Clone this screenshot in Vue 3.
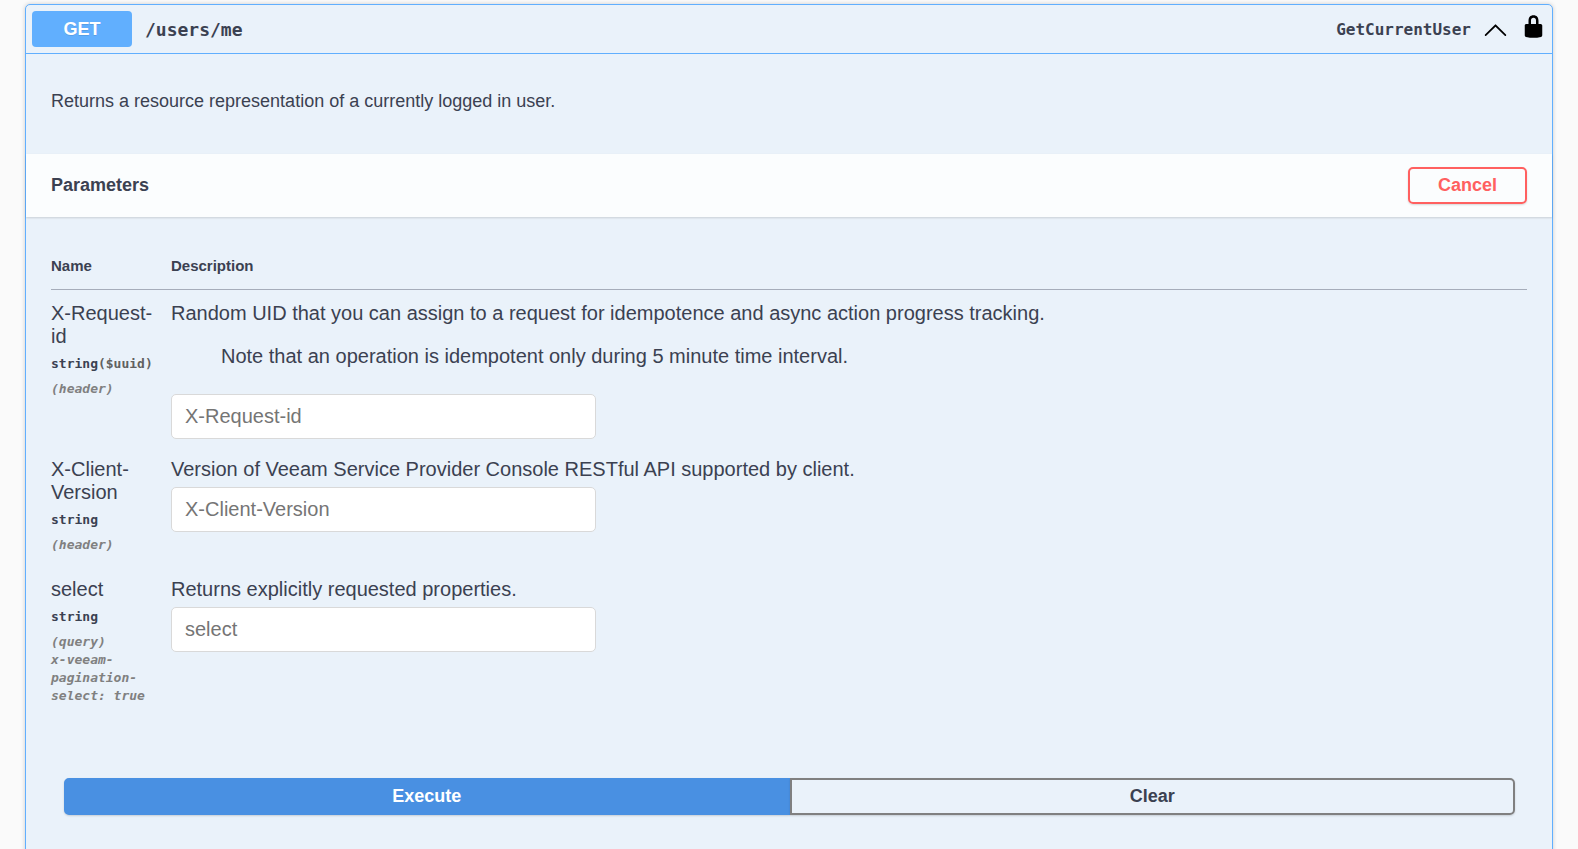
<script setup>
import { ref } from 'vue'

const params = ref([
  {
    name: 'X-Request-id',
    type: 'string',
    format: '($uuid)',
    place: '(header)',
    text: 'Random UID that you can assign to a request for idempotence and async action progress tracking.',
    note: 'Note that an operation is idempotent only during 5 minute time interval.',
    value: ''
  },
  {
    name: 'X-Client-Version',
    type: 'string',
    place: '(header)',
    text: 'Version of Veeam Service Provider Console RESTful API supported by client.',
    value: ''
  },
  {
    name: 'select',
    type: 'string',
    place: '(query)',
    extension: 'x-veeam-pagination-select: true',
    text: 'Returns explicitly requested properties.',
    value: ''
  }
])

function clear() {
  params.value.forEach((p) => { p.value = '' })
}
</script>

<template>
  <main class="page">
    <section class="operation">
      <header class="summary">
        <span class="method">GET</span>
        <span class="path">/users/me</span>
        <span class="operation-id">GetCurrentUser</span>
        <button class="icon-button" type="button" aria-label="Collapse operation">
          <svg class="icon" viewBox="0 0 20 20" aria-hidden="true">
            <path d="M17.418 14.908c.272.268.709.268.979 0s.271-.701 0-.969l-7.908-7.83a.697.697 0 0 0-.979 0l-7.908 7.83c-.271.268-.271.701 0 .969s.709.268.979 0L10 7.767l7.418 7.141z" />
          </svg>
        </button>
        <button class="icon-button lock" type="button" aria-label="Authorization">
          <svg class="icon" viewBox="0 0 20 20" aria-hidden="true">
            <path d="M15.8 8H14V5.6C14 2.703 12.665 1 10 1 7.334 1 6 2.703 6 5.6V8H4c-.553 0-1 .646-1 1.199V17c0 .549.428 1.139.951 1.307l1.197.387C5.672 18.861 6.55 19 7.1 19h5.8c.549 0 1.428-.139 1.951-.307l1.196-.387c.524-.167.953-.757.953-1.306V9.199C17 8.646 16.352 8 15.8 8zM12 8H8V5.199C8 3.754 8.797 3 10 3c1.203 0 2 .754 2 2.199V8z" />
          </svg>
        </button>
      </header>

      <p class="about">Returns a resource representation of a currently logged in user.</p>

      <div class="section-bar">
        <h4 class="section-title">Parameters</h4>
        <button class="btn cancel" type="button">Cancel</button>
      </div>

      <div class="table-wrap">
        <table class="params">
          <thead>
            <tr>
              <th class="name-col" scope="col">Name</th>
              <th scope="col">Description</th>
            </tr>
          </thead>
          <tbody>
            <tr v-for="p in params" :key="p.name">
              <td class="name-col">
                <label class="name" :for="p.name">{{ p.name }}</label>
                <div class="type">{{ p.type }}<span v-if="p.format" class="format">{{ p.format }}</span></div>
                <div class="meta">
                  <div>{{ p.place }}</div>
                  <div v-if="p.extension">{{ p.extension }}</div>
                </div>
              </td>
              <td>
                <p class="text">{{ p.text }}</p>
                <blockquote v-if="p.note" class="note">{{ p.note }}</blockquote>
                <input :id="p.name" v-model="p.value" class="field" type="text" :placeholder="p.name" />
              </td>
            </tr>
          </tbody>
        </table>
      </div>

      <div class="actions">
        <button class="btn execute" type="button">Execute</button>
        <button class="btn clear" type="button" @click="clear">Clear</button>
      </div>
    </section>
  </main>
</template>

<style>
body {
  background: #fafafa;
  overflow: hidden;
}
</style>

<style scoped>
.page {
  box-sizing: border-box;
  min-height: 100vh;
  padding: 4px 25px 0;
  color: #3b4151;
  font-family: "Liberation Sans", Arial, sans-serif;
}

.operation {
  border: 1px solid #61affe;
  border-radius: 5px;
  background: #eaf2fa;
  box-shadow: 0 0 4px rgba(0, 0, 0, 0.19);
}

.summary {
  display: flex;
  align-items: center;
  padding: 6px;
  border-bottom: 1px solid #61affe;
}

.method {
  width: 100px;
  border-radius: 4px;
  background: #61affe;
  color: #fff;
  font-size: 18px;
  font-weight: 700;
  line-height: 36px;
  text-align: center;
  text-shadow: 0 1px 0 rgba(0, 0, 0, 0.1);
}

.path {
  flex: 1;
  padding: 2px 13px 0;
  font: 700 18px/24px "DejaVu Sans Mono", monospace;
}

.operation-id {
  padding-top: 2px;
  font: 700 16px/24px "DejaVu Sans Mono", monospace;
}

.icon-button {
  display: flex;
  margin-left: 12px;
  padding: 0;
  border: 0;
  background: none;
  cursor: pointer;
}

.lock {
  margin-left: 13px;
  padding-bottom: 6px;
}

.icon {
  width: 25px;
  height: 25px;
  fill: #000;
}

.about {
  margin: 0;
  padding: 36px 25px 42px;
  font-size: 18px;
  line-height: 22px;
}

.section-bar {
  display: flex;
  align-items: center;
  justify-content: space-between;
  padding: 13px 25px;
  background: #fbfdfe;
  box-shadow: 0 1px 2px rgba(0, 0, 0, 0.15);
}

.section-title {
  margin: 0;
  font-size: 18px;
}

.btn {
  box-sizing: border-box;
  height: 37px;
  padding: 0 28px 2px;
  border: 2px solid #808080;
  border-radius: 5px;
  background: transparent;
  box-shadow: 0 1px 2px rgba(0, 0, 0, 0.15);
  color: #3b4151;
  font: 700 18px/20px "Liberation Sans", Arial, sans-serif;
  cursor: pointer;
}

.cancel {
  width: 119px;
  border-color: #ff6060;
  color: #ff6060;
}

.table-wrap {
  padding: 25px;
}

.params {
  width: 100%;
  border-collapse: collapse;
}

.params th {
  padding: 15px 0 14px;
  border-bottom: 1px solid #a6adba;
  font-size: 15px;
  line-height: 18px;
  text-align: left;
}

.params td {
  padding: 12px 0 7px;
  font-size: 20px;
  line-height: 23px;
  vertical-align: top;
}

.params .name-col {
  box-sizing: border-box;
  width: 120px;
  padding-right: 10px;
}

.name {
  display: block;
}

.type {
  margin-top: 6px;
  font: 700 13px/20px "DejaVu Sans Mono", monospace;
}

.format {
  color: #606060;
}

.meta {
  margin: 6px 0 5px;
  color: #808080;
  font: italic 700 13px/18px "DejaVu Sans Mono", monospace;
}

.text {
  margin: 0;
}

.note {
  margin: 20px 50px 26px;
}

.field {
  display: block;
  box-sizing: border-box;
  width: 425px;
  max-width: 100%;
  height: 45px;
  margin: 6px 0 0;
  padding: 0 13px;
  border: 1px solid #d9d9d9;
  border-radius: 5px;
  background: #fff;
  color: #3b4151;
  font: 20px "Liberation Sans", Arial, sans-serif;
}

.field::placeholder {
  color: #757575;
  opacity: 1;
}

.actions {
  display: flex;
  padding: 36px 37px 50px 38px;
}

.actions .btn {
  flex: 1;
}

.execute {
  border-color: #4990e2;
  border-radius: 5px 0 0 5px;
  background: #4990e2;
  color: #fff;
}

.clear {
  border-radius: 0 5px 5px 0;
}
</style>
